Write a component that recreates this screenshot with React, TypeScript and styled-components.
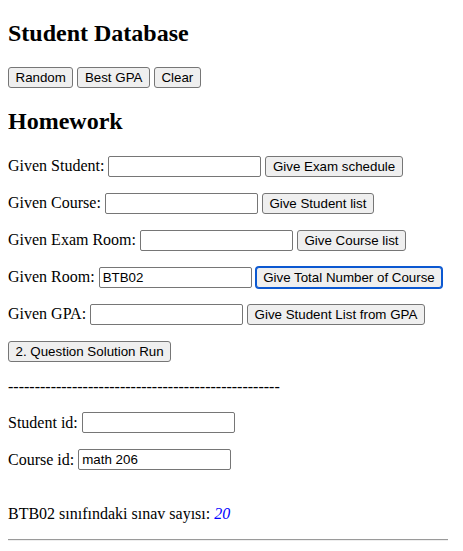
import React from "react";
import styled, { createGlobalStyle, css } from "styled-components";

const Global = createGlobalStyle`
  html, body { background: #ffffff; }
  body {
    margin: 0 8px;
    font-family: "Liberation Serif", "Times New Roman", serif;
    font-size: 16px;
    color: #000000;
  }
`;

const Page = styled.div`
  display: flow-root;
`;

const Heading = styled.h2`
  font-family: "Liberation Serif", "Times New Roman", serif;
  font-size: 24px;
  font-weight: bold;
  margin: 19.92px 0;
  line-height: 27.6px;
`;

const Toolbar = styled.div`
  display: flex;
  align-items: center;
  gap: 4px;
  height: 21px;
`;

const Row = styled.div`
  display: flex;
  align-items: center;
  gap: 4px;
  height: 21px;
  margin: 16px 0;
  white-space: nowrap;
`;

const Label = styled.label`
  font-family: "Liberation Serif", "Times New Roman", serif;
  font-size: 16px;
  line-height: 18px;
`;

const Button = styled.button<{ $focused?: boolean }>`
  box-sizing: border-box;
  height: 21px;
  padding: 0 6.5px;
  margin: 0;
  font-family: "Liberation Sans", Arial, sans-serif;
  font-size: 13.33px;
  line-height: 15px;
  color: #000000;
  background: #efefef;
  border: 1px solid #767676;
  border-radius: 3px;
  cursor: default;
  ${(p) =>
    p.$focused &&
    css`
      border-color: #0b58d1;
      box-shadow: 0 0 0 1px #0b58d1;
    `}
`;

const Field = styled.input`
  box-sizing: border-box;
  width: 153px;
  height: 21px;
  padding: 1px 3px;
  margin: 0;
  font-family: "Liberation Sans", Arial, sans-serif;
  font-size: 13.33px;
  color: #000000;
  background: #ffffff;
  border: 1px solid #767676;
  border-radius: 2px;
  outline: none;
`;

const Divider = styled.p`
  margin: 16px 0;
  line-height: 18.4px;
  color: #000000;
`;

const Result = styled.p`
  margin: 34.4px 0 16px;
  line-height: 18.4px;
`;

const Count = styled.i`
  color: #0000ff;
`;

const Rule = styled.hr`
  margin: 8px 7px 8px 0;
  border: none;
  border-top: 1px solid #9a9a9a;
  border-bottom: 1px solid #eeeeee;
  height: 0;
`;

type HomeworkRow = { label: string; value: string; action: string; focused?: boolean };

const rows: HomeworkRow[] = [
  { label: "Given Student:", value: "", action: "Give Exam schedule" },
  { label: "Given Course:", value: "", action: "Give Student list" },
  { label: "Given Exam Room:", value: "", action: "Give Course list" },
  { label: "Given Room:", value: "BTB02", action: "Give Total Number of Course", focused: true },
  { label: "Given GPA:", value: "", action: "Give Student List from GPA" },
];

export default function App() {
  return (
    <Page>
      <Global />
      <Heading>Student Database</Heading>
      <Toolbar>
        <Button>Random</Button>
        <Button>Best GPA</Button>
        <Button>Clear</Button>
      </Toolbar>
      <Heading>Homework</Heading>
      {rows.map((r) => (
        <Row key={r.label}>
          <Label>{r.label}</Label>
          <Field defaultValue={r.value} />
          <Button $focused={r.focused}>{r.action}</Button>
        </Row>
      ))}
      <Row>
        <Button>2. Question Solution Run</Button>
      </Row>
      <Divider>{"-".repeat(51)}</Divider>
      <Row>
        <Label>Student id:</Label>
        <Field defaultValue="" />
      </Row>
      <Row>
        <Label>Course id:</Label>
        <Field defaultValue="math 206" />
      </Row>
      <Result>
        BTB02 sınıfındaki sınav sayısı: <Count>20</Count>
      </Result>
      <Rule />
    </Page>
  );
}
